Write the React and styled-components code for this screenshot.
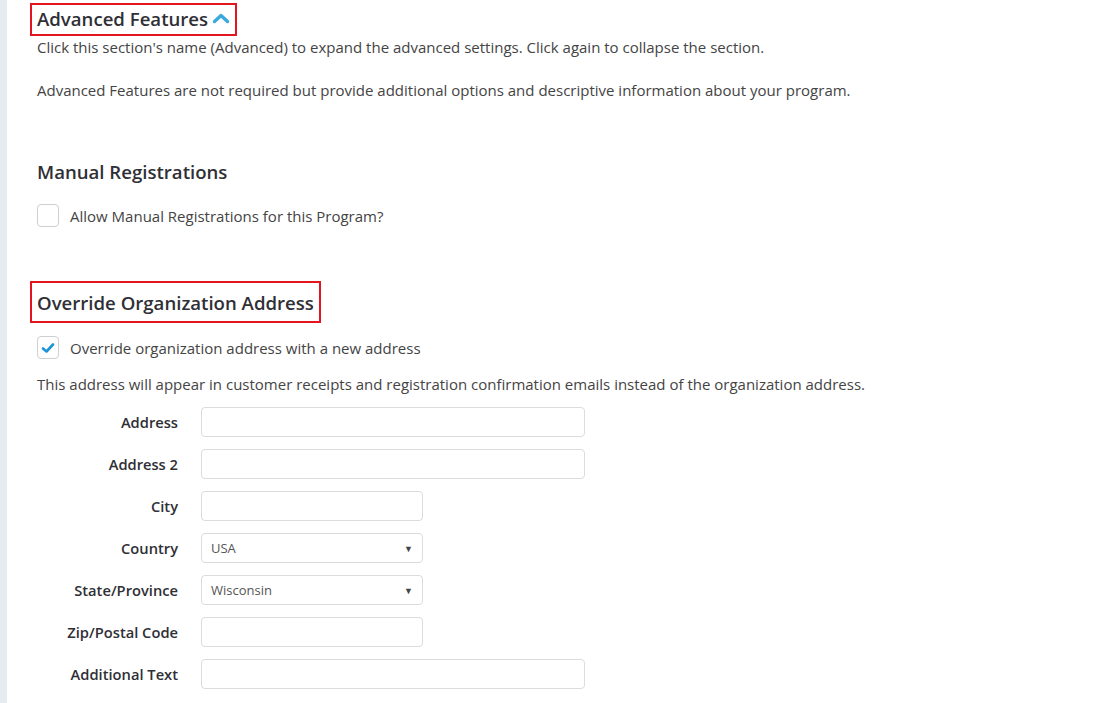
import React from 'react';
import styled, { createGlobalStyle } from 'styled-components';

const GlobalStyle = createGlobalStyle`
  html, body {
    margin: 0;
    padding: 0;
    background: #fff;
  }
  body {
    font-family: "Open Sans", Lato, Arial, sans-serif;
    color: #3a3a3a;
  }
`;

const StyledPage = styled.div`
  display: flex;
  min-height: 703px;
`;

const StyledRail = styled.div`
  width: 7px;
  flex-shrink: 0;
  background: #e4ecef;
`;

const StyledMain = styled.main`
  flex: 1;
  padding: 3px 0 0 23px;
`;

const StyledHeading = styled.h2`
  display: inline-flex;
  align-items: center;
  gap: 4px;
  box-sizing: border-box;
  height: ${({ $tall }) => ($tall ? '42px' : '33px')};
  margin: ${({ $mt }) => $mt || 0}px 0 0 0;
  padding: 0 5px ${({ $tall }) => ($tall ? 0 : 3)}px;
  border: 2px solid ${({ $boxed }) => ($boxed ? '#e3161f' : 'transparent')};
  font-size: 18.6px;
  font-weight: 600;
  color: #2f2f36;
`;

const StyledText = styled.p`
  margin: ${({ $mt }) => $mt || 0}px 0 0 7px;
  font-size: 15px;
  line-height: 20px;
  color: #444;
`;

const StyledCheckRow = styled.label`
  display: flex;
  align-items: center;
  gap: 11px;
  margin: ${({ $mt }) => $mt || 0}px 0 0 7px;
  font-size: 15px;
  color: #444;
`;

const StyledBox = styled.span`
  display: inline-flex;
  align-items: center;
  justify-content: center;
  box-sizing: border-box;
  width: 22px;
  height: 23px;
  border: 1px solid #cfcfcf;
  border-radius: 4px;
  background: #fff;
`;

const StyledForm = styled.div`
  display: grid;
  grid-template-columns: 141px auto;
  column-gap: 23px;
  row-gap: 12px;
  margin: 13px 0 0 7px;
  align-items: center;
  justify-items: start;
`;

const StyledLabel = styled.span`
  justify-self: end;
  font-size: 14.7px;
  font-weight: 600;
  color: #2f2f36;
`;

const StyledInput = styled.div`
  box-sizing: border-box;
  width: ${({ $wide }) => ($wide ? 384 : 222)}px;
  height: 30px;
  border: 1px solid #dcdcdc;
  border-radius: 4px;
  background: #fff;
`;

const StyledSelect = styled(StyledInput)`
  display: flex;
  align-items: center;
  justify-content: space-between;
  padding: 0 9px;
  font-size: 13px;
  color: #555;

  &:after {
    content: '▼';
    font-size: 9px;
    color: #444;
  }
`;

const Check = () => (
  <svg width="14" height="12" viewBox="0 0 14 12">
    <path d="M2 6.5 L5.5 9.5 L12 2.5" fill="none" stroke="#1b95d8" strokeWidth="2.6" strokeLinecap="round" strokeLinejoin="round" />
  </svg>
);

const Chevron = () => (
  <svg width="18" height="12" viewBox="0 0 18 12">
    <path d="M2.5 9.5 L9 3.5 L15.5 9.5" fill="none" stroke="#3aa9dc" strokeWidth="3.4" strokeLinecap="round" strokeLinejoin="round" />
  </svg>
);

const fields = [
  { label: 'Address', wide: true },
  { label: 'Address 2', wide: true },
  { label: 'City' },
  { label: 'Country', value: 'USA' },
  { label: 'State/Province', value: 'Wisconsin' },
  { label: 'Zip/Postal Code' },
  { label: 'Additional Text', wide: true },
];

const App = () => (
  <StyledPage>
    <GlobalStyle />
    <StyledRail />
    <StyledMain>
      <StyledHeading $boxed>
        Advanced Features
        <Chevron />
      </StyledHeading>
      <StyledText $mt={1}>
        Click this section's name (Advanced) to expand the advanced settings. Click again to
        collapse the section.
      </StyledText>
      <StyledText $mt={23}>
        Advanced Features are not required but provide additional options and descriptive
        information about your program.
      </StyledText>

      <div>
        <StyledHeading $mt={50} $tall>Manual Registrations</StyledHeading>
      </div>
      <StyledCheckRow $mt={12}>
        <StyledBox />
        Allow Manual Registrations for this Program?
      </StyledCheckRow>

      <div>
        <StyledHeading $boxed $tall $mt={54}>Override Organization Address</StyledHeading>
      </div>
      <StyledCheckRow $mt={13}>
        <StyledBox>
          <Check />
        </StyledBox>
        Override organization address with a new address
      </StyledCheckRow>
      <StyledText $mt={15}>
        This address will appear in customer receipts and registration confirmation emails instead
        of the organization address.
      </StyledText>

      <StyledForm>
        {fields.map((f) => (
          <React.Fragment key={f.label}>
            <StyledLabel>{f.label}</StyledLabel>
            {f.value ? (
              <StyledSelect>{f.value}</StyledSelect>
            ) : (
              <StyledInput $wide={f.wide} />
            )}
          </React.Fragment>
        ))}
      </StyledForm>
    </StyledMain>
  </StyledPage>
);

export default App;
